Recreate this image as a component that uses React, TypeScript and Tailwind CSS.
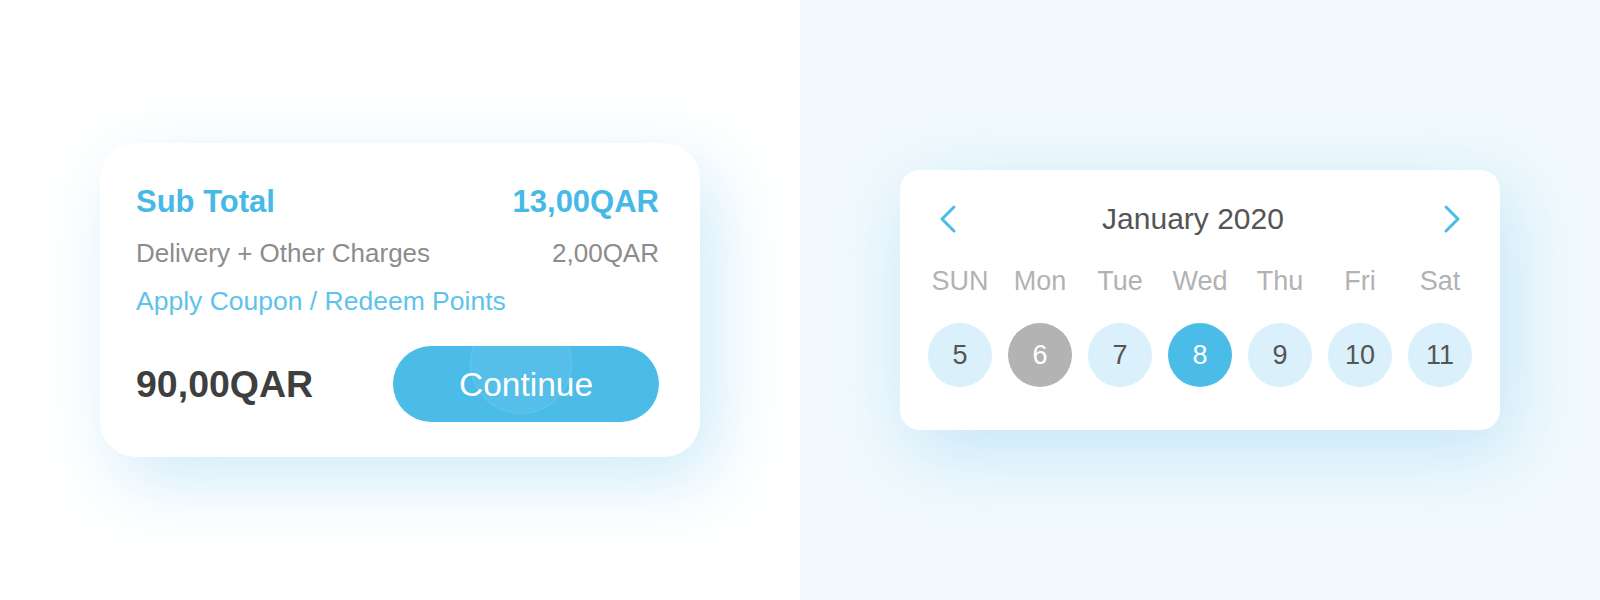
import React from 'react';

const FONT = { fontFamily: '"Liberation Sans", Arial, Helvetica, sans-serif' };

const WEEKDAYS = ['SUN', 'Mon', 'Tue', 'Wed', 'Thu', 'Fri', 'Sat'];

type DayState = 'normal' | 'disabled' | 'selected';

const DAYS: { n: number; state: DayState }[] = [
  { n: 5, state: 'normal' },
  { n: 6, state: 'disabled' },
  { n: 7, state: 'normal' },
  { n: 8, state: 'selected' },
  { n: 9, state: 'normal' },
  { n: 10, state: 'normal' },
  { n: 11, state: 'normal' },
];

function dayClass(state: DayState): string {
  if (state === 'selected') return 'bg-[#4bbbe8] text-white';
  if (state === 'disabled') return 'bg-[#b3b3b3] text-white';
  return 'bg-[#daf0fa] text-[#555555]';
}

function Chevron({ dir }: { dir: 'left' | 'right' }) {
  return (
    <svg width="20" height="30" viewBox="0 0 20 30" fill="none" aria-hidden>
      <polyline
        points={dir === 'left' ? '16,3 4,15 16,27' : '4,3 16,15 4,27'}
        stroke="#4bbbe8"
        strokeWidth="3"
        strokeLinecap="round"
        strokeLinejoin="round"
      />
    </svg>
  );
}

function CheckoutCard() {
  return (
    <div className="w-[600px] rounded-[36px] bg-white pl-[36px] pr-[41px] pt-[44px] pb-[35px] shadow-[16px_24px_70px_rgba(110,195,240,0.33)]">
      <div className="flex items-start justify-between text-[31px] leading-[30px] font-bold text-[#47b9e7]">
        <span>Sub Total</span>
        <span>13,00QAR</span>
      </div>
      <div className="mt-[23px] flex items-start justify-between text-[26px] leading-[26px] text-[#8c8c8c]">
        <span>Delivery + Other Charges</span>
        <span>2,00QAR</span>
      </div>
      <div className="mt-[22px] text-[26.5px] leading-[26px] text-[#5ec3ec]">
        Apply Coupon / Redeem Points
      </div>
      <div className="mt-[32px] flex items-center justify-between">
        <span className="text-[37.5px] leading-[36px] font-bold text-[#3f3f3f]">90,00QAR</span>
        <button
          type="button"
          className="relative w-[266px] h-[76px] rounded-full bg-[#4bbbe8] overflow-hidden flex items-center justify-center"
        >
          <span className="absolute left-[77px] top-[-34px] w-[102px] h-[102px] rounded-full bg-white/[0.06] border border-white/10" />
          <span className="relative pt-[2px] text-[33.5px] leading-[32px] text-white">Continue</span>
        </button>
      </div>
    </div>
  );
}

function CalendarCard() {
  return (
    <div className="w-[600px] rounded-[20px] bg-white px-[20px] pt-[33px] pb-[43px] shadow-[10px_20px_70px_rgba(110,195,240,0.35)]">
      <div className="flex items-center justify-between h-[32px] px-[18px]">
        <Chevron dir="left" />
        <span className="pr-[14px] text-[30px] leading-[32px] text-[#555555]">January 2020</span>
        <Chevron dir="right" />
      </div>
      <div className="mt-[33px] grid grid-cols-7">
        {WEEKDAYS.map((d) => (
          <div key={d} className="text-center text-[27px] leading-[26px] text-[#b2b2b2]">
            {d}
          </div>
        ))}
      </div>
      <div className="mt-[29px] grid grid-cols-7">
        {DAYS.map((d) => (
          <div key={d.n} className="flex justify-center">
            <div
              className={`w-[64px] h-[64px] rounded-full flex items-center justify-center text-[27px] leading-[26px] ${dayClass(d.state)}`}
            >
              {d.n}
            </div>
          </div>
        ))}
      </div>
    </div>
  );
}

export default function App() {
  return (
    <div className="flex w-[1600px] h-[600px] overflow-hidden" style={FONT}>
      <div className="w-[800px] h-full bg-white pl-[100px] pt-[143px]">
        <CheckoutCard />
      </div>
      <div className="w-[800px] h-full bg-[#f1f9fd] pl-[100px] pt-[170px]">
        <CalendarCard />
      </div>
    </div>
  );
}
